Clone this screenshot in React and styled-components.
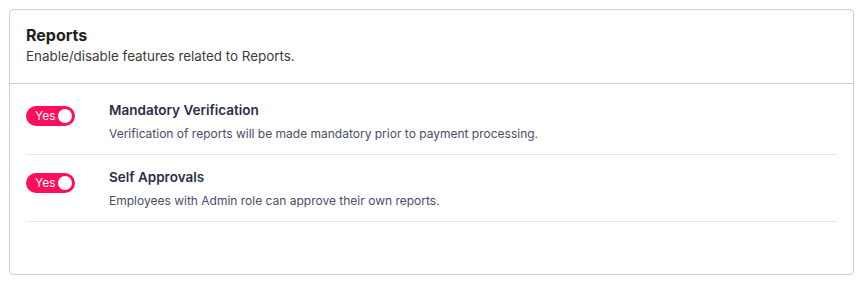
import React from "react";
import styled, { createGlobalStyle } from "styled-components";

const GlobalStyle = createGlobalStyle`
  body {
    margin: 0;
    padding: 9px 11px 9px 9px;
    background: #ffffff;
    font-family: Inter, "Noto Sans", sans-serif;
    -webkit-font-smoothing: antialiased;
  }
`;

const settings = [
  {
    id: "verification",
    title: "Mandatory Verification",
    description:
      "Verification of reports will be made mandatory prior to payment processing.",
    enabled: true,
  },
  {
    id: "self-approval",
    title: "Self Approvals",
    description: "Employees with Admin role can approve their own reports.",
    enabled: true,
  },
];

function Toggle({ checked }) {
  return (
    <Switch checked={checked}>
      <span className="label">{checked ? "Yes" : "No"}</span>
      <span className="knob" />
    </Switch>
  );
}

function App() {
  return (
    <>
      <GlobalStyle />
      <Card>
        <CardHeader>
          <h2>Reports</h2>
          <p>Enable/disable features related to Reports.</p>
        </CardHeader>
        <CardBody>
          {settings.map((item) => (
            <SettingRow key={item.id}>
              <ToggleCell>
                <Toggle checked={item.enabled} />
              </ToggleCell>
              <div>
                <SettingTitle>{item.title}</SettingTitle>
                <SettingDescription>{item.description}</SettingDescription>
              </div>
            </SettingRow>
          ))}
        </CardBody>
      </Card>
    </>
  );
}

const Card = styled.div`
  border: solid 1px #cfcfcf;
  border-radius: 4px;
  height: 266px;
  box-sizing: border-box;
  background: #fff;
`;

const CardHeader = styled.div`
  padding: 15px 16px 17px 16px;
  border-bottom: solid 1px #cfcfcf;
  h2 {
    margin: 0;
    font-size: 16px;
    line-height: 20px;
    font-weight: 700;
    color: #1f1f1f;
  }
  p {
    margin: 1px 0 0 0;
    font-size: 13.4px;
    line-height: 20px;
    color: #3b3b3b;
  }
`;

const CardBody = styled.div`
  padding: 4px 16px 0 16px;
`;

const SettingRow = styled.div`
  display: flex;
  align-items: flex-start;
  padding: 12px 0;
  border-bottom: solid 1px #e8e8ec;
`;

const ToggleCell = styled.div`
  width: 83px;
  flex-shrink: 0;
  padding-top: 6px;
`;

const Switch = styled.div`
  display: flex;
  align-items: center;
  justify-content: space-between;
  box-sizing: border-box;
  width: 49px;
  height: 20px;
  padding: 0 3px 0 9px;
  border-radius: 10px;
  background-color: ${(p) => (p.checked ? "#ff0f5b" : "#c8c8d0")};
  .label {
    font-size: 12px;
    line-height: 20px;
    color: #fff;
  }
  .knob {
    width: 14px;
    height: 14px;
    border-radius: 50%;
    background: #fff;
  }
`;

const SettingTitle = styled.div`
  font-size: 13.5px;
  line-height: 20px;
  font-weight: 600;
  color: #2b2d4a;
`;

const SettingDescription = styled.div`
  margin-top: 6px;
  font-size: 12px;
  line-height: 16px;
  color: #4a4c68;
`;

export default App;
